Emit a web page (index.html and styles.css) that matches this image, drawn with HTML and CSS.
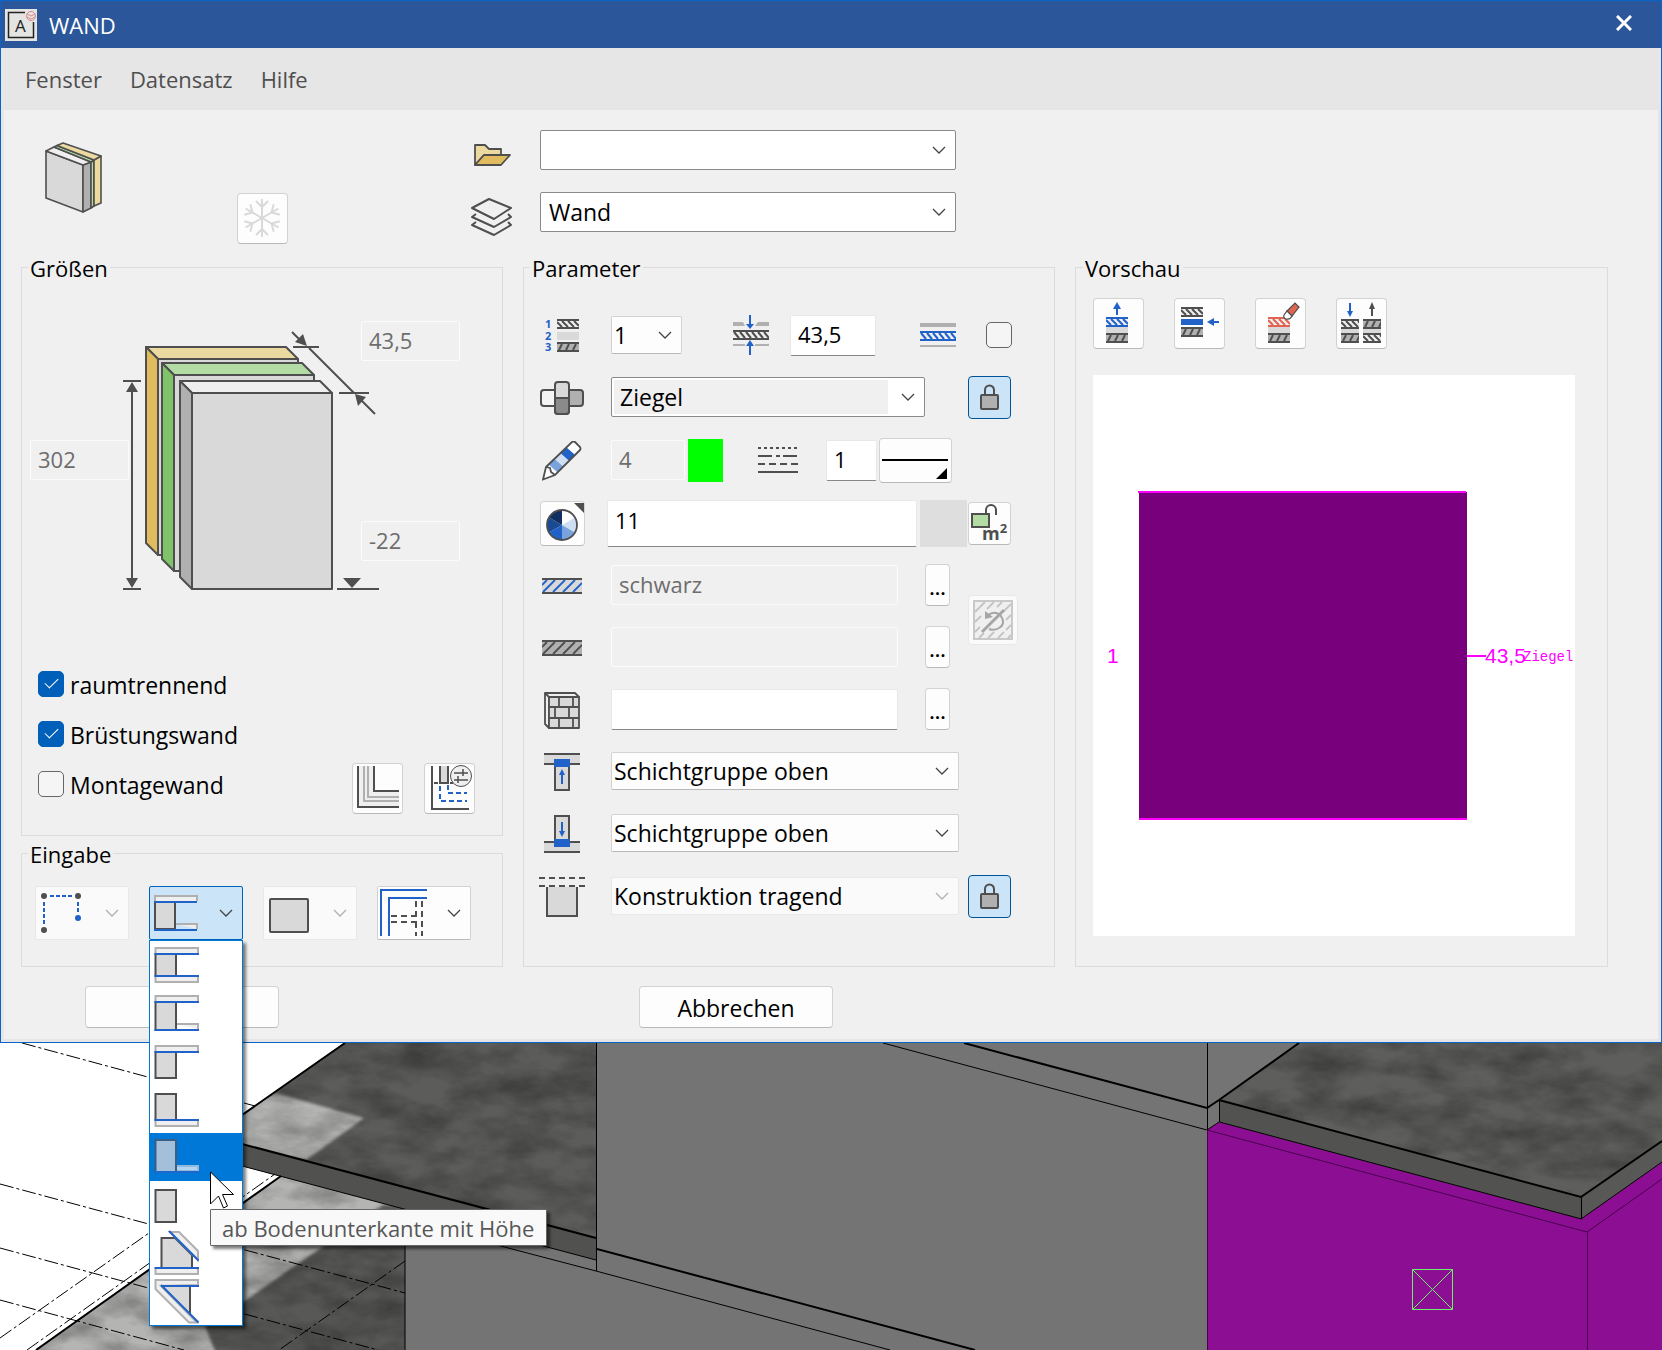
FILE: index.html
```html
<!DOCTYPE html>
<html lang="de">
<head>
    <meta charset="UTF-8">
    <meta name="viewport" content="width=device-width, initial-scale=1.0">
    <title>WAND</title>
    <link rel="stylesheet" href="styles.css">
</head>
<body>
    <!-- Shared icon parts -->
    <svg class="defs" width="0" height="0" aria-hidden="true">
        <defs>
            <symbol id="chevron" viewBox="0 0 14 8">
                <path d="M1 1l6 6 6-6" fill="none" stroke="currentColor" stroke-width="1.3"/>
            </symbol>
            <symbol id="hatch-a" viewBox="0 0 22 10" preserveAspectRatio="xMinYMin slice">
                <rect width="22" height="10" fill="#efefef"/>
                <path d="M0 3l5 5M5 2l6 6M11 2l6 6M17 2l5 5" stroke="currentColor" stroke-width="2"/>
                <path d="M0 1h22M0 9h22" stroke="currentColor" stroke-width="2"/>
            </symbol>
            <symbol id="hatch-b" viewBox="0 0 22 10" preserveAspectRatio="xMinYMin slice">
                <rect width="22" height="10" fill="#b0b0b0"/>
                <path d="M5 2l-3 6M12 2l-3 6M19 2l-3 6" stroke="currentColor" stroke-width="2"/>
                <path d="M0 1h22M0 9h22" stroke="currentColor" stroke-width="2"/>
            </symbol>
            <symbol id="lock" viewBox="0 0 43 43">
                <path d="M16 18v-5a4.500 4.500 0 0 1 9 0v5" fill="none" stroke="#4f4f4f" stroke-width="2"/>
                <rect x="12" y="18" width="17" height="14" rx="1" fill="#b0b0b0" stroke="#4f4f4f" stroke-width="2"/>
            </symbol>
        </defs>
    </svg>

    <div class="dialog">
        <header class="titlebar">
            <svg class="app-icon" width="32" height="32" viewBox="0 0 32 32">
                <rect width="32" height="32" fill="#e4e4e2"/>
                <path d="M20 3.500H3.500v25h25V13" fill="none" stroke="#222" stroke-width="1.5"/>
                <text x="10" y="23" class="app-letter">A</text>
                <circle cx="26" cy="7" r="4.500" fill="none" stroke="#d98a8a"/>
                <path d="M22 5l4 2 4-2M22 8l4 2 4-2" fill="none" stroke="#d98a8a"/>
            </svg>
            <h1>WAND</h1>
            <button class="close" aria-label="Schließen">
                <svg width="16" height="16" viewBox="0 0 16 16"><path d="M1 1l14 14M15 1L1 15" stroke="#fff" stroke-width="3"/></svg>
            </button>
        </header>

        <nav class="menubar">
            <a href="#">Fenster</a>
            <a href="#">Datensatz</a>
            <a href="#">Hilfe</a>
        </nav>

        <main class="content">
            <div class="head">
                <svg class="wall-icon" width="58" height="71" viewBox="45 142 58 71" stroke="#4f4f4f" stroke-width="1.6" stroke-linejoin="round">
                    <path d="M46 151l37 14v47l-37-14z" fill="#d9d9d9"/>
                    <path d="M83 165l8-3v46l-8 4z" fill="#b0b0b0"/>
                    <path d="M91 162l3-2v46l-3 2z" fill="#b2dca4"/>
                    <path d="M94 160l7-4v47l-7 3z" fill="#ecd9a0"/>
                    <path d="M46 151l8-4 37 15-8 3z" fill="#efefef"/>
                    <path d="M54 147l3-1.500 37 14.500-3 2z" fill="#b2dca4"/>
                    <path d="M57 145.500l6-2.500 38 13-7 4z" fill="#ecd9a0"/>
                </svg>
                <button class="tool snow" aria-label="Einfrieren">
                    <svg width="40" height="40" viewBox="-19 -19 40 40" fill="none" stroke="#d9d9d9" stroke-width="2">
                        <path d="M0 0v-19M0-11l-6-6M0-11l6-6"/>
                        <path d="M0 0v-19M0-11l-6-6M0-11l6-6" transform="rotate(60)"/>
                        <path d="M0 0v-19M0-11l-6-6M0-11l6-6" transform="rotate(120)"/>
                        <path d="M0 0v-19M0-11l-6-6M0-11l6-6" transform="rotate(180)"/>
                        <path d="M0 0v-19M0-11l-6-6M0-11l6-6" transform="rotate(240)"/>
                        <path d="M0 0v-19M0-11l-6-6M0-11l6-6" transform="rotate(300)"/>
                    </svg>
                </button>
                <div class="head-fields">
                    <label for="datei" aria-label="Datei">
                        <svg width="37" height="23" viewBox="0 0 37 23" stroke="#4f4f4f" stroke-width="1.8" stroke-linejoin="round">
                            <path d="M1 21V1h10l4 4h12v6H10z" fill="#ecd9a0"/>
                            <path d="M1 21l9-10h26l-9 10z" fill="#e0bc5e"/>
                        </svg>
                    </label>
                    <div class="select-box">
                        <select id="datei" class="combo"><option></option></select>
                        <svg class="chev"><use href="#chevron"/></svg>
                    </div>
                    <label for="layer" aria-label="Layer">
                        <svg width="42" height="39" viewBox="0 0 42 39" fill="none" stroke="#4f4f4f" stroke-width="2" stroke-linejoin="round">
                            <path d="M18 1l22 9-17 11L1 10z"/>
                            <path d="M5 16l-4 3 22 10 17-10-3-3"/>
                            <path d="M5 24l-4 3 22 10 17-10-3-3"/>
                        </svg>
                    </label>
                    <div class="select-box">
                        <select id="layer" class="combo"><option>Wand</option></select>
                        <svg class="chev"><use href="#chevron"/></svg>
                    </div>
                </div>
            </div>

            <div class="panels">
                <div class="left">
                    <fieldset class="sizes">
                        <legend>Größen</legend>
                        <div class="diagram">
                            <svg width="430" height="276" viewBox="30 31 430 276" stroke="#4f4f4f" stroke-width="2" stroke-linejoin="round">
                                <path d="M158 69h140v196H158z" fill="#d9d9d9"/>
                                <path d="M146 57h140l12 12H158z" fill="#ecd9a0"/>
                                <path d="M146 57l12 12v196l-12-12z" fill="#e0bc5e"/>
                                <path d="M174 85h140v196H174z" fill="#d9d9d9"/>
                                <path d="M162 73h140l12 12H174z" fill="#b2dca4"/>
                                <path d="M162 73l12 12v196l-12-12z" fill="#7fc468"/>
                                <path d="M192 103h140v196H192z" fill="#d9d9d9"/>
                                <path d="M180 91h140l12 12H192z" fill="#efefef"/>
                                <path d="M180 91l12 12v196l-12-12z" fill="#b0b0b0"/>
                                <!-- dimension lines -->
                                <path d="M123 91h18M123 299h18M132 96v198M292 42l12 12M293 57h26M309 58l45 45M339 103h30M358 107l17 17M337 299h42" fill="none"/>
                                <path d="M132 92l6 10h-12zM132 298l6-10h-12zM307 56l-4-12-8 8zM355 104l11 3-8 9zM343 288h18l-9 10z" fill="#4f4f4f" stroke="none"/>
                            </svg>
                            <input class="dim thick" type="text" value="43,5" aria-label="Dicke" disabled>
                            <input class="dim height" type="text" value="302" aria-label="Höhe" disabled>
                            <input class="dim base" type="text" value="-22" aria-label="Unterkante" disabled>
                        </div>
                        <div class="options">
                            <div class="checks">
                                <div class="check">
                                    <input id="raum" type="checkbox" checked>
                                    <label for="raum">raumtrennend</label>
                                </div>
                                <div class="check">
                                    <input id="bruestung" type="checkbox" checked>
                                    <label for="bruestung">Brüstungswand</label>
                                </div>
                                <div class="check">
                                    <input id="montage" type="checkbox">
                                    <label for="montage">Montagewand</label>
                                </div>
                            </div>
                            <div class="option-tools">
                                <button class="tool" aria-label="Schichten">
                                    <svg width="49" height="49" viewBox="1 1 49 49" fill="none" stroke-width="2">
                                        <path d="M6 3v41h41V28H22V3z" fill="#efefef"/>
                                        <path d="M12 3v35h35M16 3v31h31" stroke="#b0b0b0"/>
                                        <path d="M6 3v41h41M22 3v25h25" stroke="#4f4f4f"/>
                                    </svg>
                                </button>
                                <button class="tool" aria-label="Anschluss">
                                    <svg width="49" height="49" viewBox="1 1 49 49" fill="none" stroke-width="2">
                                        <path d="M16 3v17h8V3" fill="#d9d9d9" stroke="#4f4f4f"/>
                                        <path d="M8 3v43h37M10 20h4M26 20h3" stroke="#4f4f4f"/>
                                        <path d="M16 23v15h27M24 22v8h19" stroke="#2062c8" stroke-dasharray="5 3"/>
                                        <circle cx="37" cy="13" r="10.500" fill="#efefef" stroke="#4f4f4f" stroke-width="1"/>
                                        <path d="M30 10h14M30 17h14M39 6v7M34 13v7" stroke="#4f4f4f" stroke-width="1.5"/>
                                    </svg>
                                </button>
                            </div>
                        </div>
                    </fieldset>

                    <fieldset class="entry">
                        <legend>Eingabe</legend>
                        <div class="entry-tools">
                            <button class="split off" aria-label="Eingabeart" disabled>
                                <svg width="52" height="52" viewBox="1 1 52 52" fill="none" stroke-width="2">
                                    <path d="M15 10h22M9 16v22M43 16v12" stroke="#2062c8" stroke-dasharray="4 2"/>
                                    <circle cx="9" cy="10" r="3" fill="#4f4f4f"/><circle cx="43" cy="10" r="3" fill="#4f4f4f"/><circle cx="9" cy="44" r="3" fill="#4f4f4f"/>
                                    <circle cx="43" cy="32" r="3" fill="#2062c8"/>
                                </svg>
                                <svg class="chev"><use href="#chevron"/></svg>
                            </button>
                            <div class="drop">
                                <button class="split open" aria-label="Höhenbezug" aria-expanded="true">
                                    <svg width="52" height="52" viewBox="1 1 52 52" stroke-width="2">
                                        <path d="M6 15V10h42v5M27 38h21v5" fill="#efefef" stroke="#b0b0b0"/>
                                        <path d="M6 16h20v27H6z" fill="#d9d9d9" stroke="#4f4f4f"/>
                                        <path d="M5 16h43M5 44h43" stroke="#2062c8"/>
                                    </svg>
                                    <svg class="chev"><use href="#chevron"/></svg>
                                </button>
                                <div class="menu" role="menu">
                                    <button role="menuitem" aria-label="Decke unten bis Boden oben">
                                        <svg width="52" height="48" viewBox="1 0 52 48" stroke-width="2">
                                            <path d="M6.500 12V7H49v5M6.500 36v5H49v-5" fill="#efefef" stroke="#b0b0b0"/>
                                            <path d="M6.500 13H27v22H6.500z" fill="#d9d9d9" stroke="#4f4f4f"/>
                                            <path d="M5.500 13H50M5.500 35H50" stroke="#2062c8"/>
                                        </svg>
                                    </button>
                                    <button role="menuitem" aria-label="Decke unten bis Boden unten">
                                        <svg width="52" height="48" viewBox="1 0 52 48" stroke-width="2">
                                            <path d="M6.500 12V7H49v5M27 35h22v5" fill="#efefef" stroke="#b0b0b0"/>
                                            <path d="M6.500 13H27v28H6.500z" fill="#d9d9d9" stroke="#4f4f4f"/>
                                            <path d="M5.500 13H50M5.500 41H50" stroke="#2062c8"/>
                                        </svg>
                                    </button>
                                    <button role="menuitem" aria-label="ab Decke mit Höhe">
                                        <svg width="52" height="48" viewBox="1 0 52 48" stroke-width="2">
                                            <path d="M6.500 14V9H49v5" fill="#efefef" stroke="#b0b0b0"/>
                                            <path d="M6.500 15H27v26H6.500z" fill="#d9d9d9" stroke="#4f4f4f"/>
                                            <path d="M5.500 15H50" stroke="#2062c8"/>
                                        </svg>
                                    </button>
                                    <button role="menuitem" aria-label="ab Bodenoberkante mit Höhe">
                                        <svg width="52" height="48" viewBox="1 0 52 48" stroke-width="2">
                                            <path d="M6.500 36v5H49v-5" fill="#efefef" stroke="#b0b0b0"/>
                                            <path d="M6.500 9H27v26H6.500z" fill="#d9d9d9" stroke="#4f4f4f"/>
                                            <path d="M5.500 35H50" stroke="#2062c8"/>
                                        </svg>
                                    </button>
                                    <button class="active" role="menuitem" aria-describedby="tip" aria-label="ab Bodenunterkante mit Höhe">
                                        <svg width="52" height="48" viewBox="1 0 52 48" stroke-width="2">
                                            <path d="M27 33h22v5H27" fill="#b4d3ee" stroke="#8fb9dd"/>
                                            <path d="M6.500 7H27v32H6.500z" fill="#a3bfd9" stroke="#3a5f85"/>
                                            <path d="M5.500 39H50" stroke="#1a68cc"/>
                                        </svg>
                                    </button>
                                    <button role="menuitem" aria-label="freie Höhe">
                                        <svg width="52" height="48" viewBox="1 0 52 48" stroke-width="2">
                                            <path d="M6.500 9H27v32H6.500z" fill="#d9d9d9" stroke="#4f4f4f"/>
                                        </svg>
                                    </button>
                                    <button role="menuitem" aria-label="Dach bis Boden">
                                        <svg width="52" height="48" viewBox="1 0 52 48" stroke-width="2">
                                            <path d="M6.500 40v5H49v-5" fill="#efefef" stroke="#b0b0b0"/>
                                            <path d="M12.500 39V9H26l17 17v13z" fill="#d9d9d9" stroke="#4f4f4f"/>
                                            <path d="M21 3h9l19 19v9z" fill="#efefef" stroke="#b0b0b0"/>
                                            <path d="M20 2l29.500 29.500M5.500 39H50" stroke="#2062c8"/>
                                        </svg>
                                    </button>
                                    <button role="menuitem" aria-label="Decke bis Dach">
                                        <svg width="52" height="48" viewBox="1 0 52 48" stroke-width="2">
                                            <path d="M12 9h29v28z" fill="#d9d9d9"/>
                                            <path d="M41 9v28" stroke="#4f4f4f"/>
                                            <path d="M49 8V3H6.500v9L40 45.500h8L12 9z" fill="#efefef" stroke="#b0b0b0"/>
                                            <path d="M12 9h38M12 8l37.500 37.500" stroke="#2062c8"/>
                                        </svg>
                                    </button>
                                </div>
                                <svg class="cursor" width="26" height="38" viewBox="0 0 26 38">
                                    <path d="M.5 1v32l8-8 5 12 4-2-5-11.500h11z" fill="#fff" stroke="#000"/>
                                </svg>
                                <div class="tooltip" id="tip" role="tooltip">ab Bodenunterkante mit Höhe</div>
                            </div>
                            <button class="split off" aria-label="Wandform" disabled>
                                <svg width="52" height="52" viewBox="1 1 52 52"><rect x="7" y="13" width="38" height="33" rx="1" fill="#d9d9d9" stroke="#4f4f4f" stroke-width="2"/></svg>
                                <svg class="chev"><use href="#chevron"/></svg>
                            </button>
                            <button class="split" aria-label="Wandanschluss">
                                <svg width="52" height="52" viewBox="1 1 52 52" fill="none" stroke-width="2">
                                    <path d="M4 50V4h46M12 50V12h38" stroke="#2062c8"/>
                                    <path d="M14 30h26M14 36h26M39 15v15M39 36v14M45 15v35" stroke="#4f4f4f" stroke-dasharray="6 4"/>
                                </svg>
                                <svg class="chev"><use href="#chevron"/></svg>
                            </button>
                        </div>
                    </fieldset>
                </div>

                <fieldset class="params">
                    <legend>Parameter</legend>
                    <div class="param-grid">
                        <label for="schicht" aria-label="Schicht">
                            <svg width="36" height="38" viewBox="0 -2 36 38" color="#4f4f4f">
                                <text class="num" x="1" y="9">1</text><text class="num" x="1" y="21">2</text><text class="num" x="1" y="32">3</text>
                                <use href="#hatch-a" x="13" y="0" width="22" height="10"/>
                                <rect x="13" y="13" width="22" height="8" fill="#d9d9d9"/>
                                <use href="#hatch-b" x="13" y="23" width="22" height="10"/>
                            </svg>
                        </label>
                        <div class="field row-layer">
                            <div class="select-box">
                                <select id="schicht" class="flat"><option>1</option></select>
                                <svg class="chev"><use href="#chevron"/></svg>
                            </div>
                            <label for="dicke" aria-label="Dicke">
                                <svg width="36" height="40" viewBox="0 0 36 40" color="#4f4f4f">
                                    <path d="M0 7h10l2 4H0zM36 7H25l-3 4h14zM0 29h12v2H0zM22 29h14v2H22z" fill="#b0b0b0"/>
                                    <rect y="15" width="36" height="10" fill="#efefef"/>
                                    <path d="M1 17l5 6M7 17l5 6M13 17l5 6M19 17l5 6M25 17l5 6M31 17l5 6M0 16h36M0 24h36" stroke="#4f4f4f" stroke-width="2"/>
                                    <path d="M17 0v10M17 30v10" stroke="#2062c8" stroke-width="2"/>
                                    <path d="M17 14l-4-5h8zM17 25l-4 6h8z" fill="#2062c8"/>
                                </svg>
                            </label>
                            <input id="dicke" class="thickness" type="text" value="43,5">
                            <label for="aktiv" aria-label="Schicht aktiv">
                                <svg width="36" height="24" viewBox="0 0 36 24">
                                    <path d="M0 0h36v4H0zM0 22h36v2H0z" fill="#b0b0b0"/>
                                    <rect y="8" width="36" height="10" fill="#efefef"/>
                                    <path d="M1 10l5 6M7 10l5 6M13 10l5 6M19 10l5 6M25 10l5 6M31 10l5 6M0 9h36M0 17h36" stroke="#2062c8" stroke-width="2"/>
                                </svg>
                            </label>
                        </div>
                        <input id="aktiv" type="checkbox" class="side-check">

                        <label for="material" aria-label="Material">
                            <svg width="44" height="34" viewBox="0 0 44 34" stroke="#4f4f4f" stroke-width="2">
                                <rect x="1" y="9" width="18" height="16" rx="3" fill="#f4f4f4"/>
                                <rect x="25" y="9" width="18" height="16" rx="3" fill="#b0b0b0"/>
                                <rect x="15" y="1" width="14" height="32" rx="3" fill="#d9d9d9"/>
                                <path d="M15 17h14v13q0 3-3 3h-8q-3 0-3-3z" fill="#8a8a8a"/>
                            </svg>
                        </label>
                        <div class="field">
                            <div class="select-box material">
                                <select id="material" class="combo"><option>Ziegel</option></select>
                                <svg class="chev"><use href="#chevron"/></svg>
                            </div>
                        </div>
                        <button class="lock" aria-label="Material gesperrt"><svg width="43" height="43"><use href="#lock"/></svg></button>

                        <label for="stift" aria-label="Stift">
                            <svg width="40" height="40" viewBox="0 0 40 40">
                                <path d="M4 26L30 1q2-1 3 0l5 5q1 2 0 3L13 34 1 38.500z" fill="#fff"/>
                                <path d="M6.600 23.500l6-5.800 8.800 7.700-5.800 6z" fill="#7aa2dd"/>
                                <path d="M12.600 17.700l5.700-5.700 8.700 7.700-5.600 5.700z" fill="#cfdff3"/>
                                <path d="M18.300 12l6-5.700 8.600 7.400-5.900 6z" fill="#2062c8"/>
                                <path d="M4 26L30 1q2-1 3 0l5 5q1 2 0 3L13 34 1 38.500zM4 26l4 1 1 4 4 3" fill="none" stroke="#4f4f4f" stroke-width="1.8"/>
                            </svg>
                        </label>
                        <div class="field row-pen">
                            <input id="stift" class="pen" type="text" value="4" disabled>
                            <span class="swatch"></span>
                            <label for="linie" aria-label="Linienart">
                                <svg width="40" height="28" viewBox="0 0 40 28" stroke="#4f4f4f" stroke-width="2">
                                    <path d="M0 2h40" stroke-dasharray="3 3"/>
                                    <path d="M0 10h14M18 10h4M25 10h14"/>
                                    <path d="M0 18h40" stroke-dasharray="7 4"/>
                                    <path d="M0 26h40"/>
                                </svg>
                            </label>
                            <input id="linie" class="line" type="text" value="1">
                            <button class="line-btn" aria-label="Linienart wählen">
                                <svg width="71" height="43" viewBox="0 0 71 43"><path d="M2 21h66" stroke="#000" stroke-width="2"/><path d="M67 29v11H56z"/></svg>
                            </button>
                        </div>
                        <span></span>

                        <button class="wheel" aria-label="Farbe">
                            <svg width="43" height="43" viewBox="-21 -23 43 43">
                                <path d="M0 0V-15A15 15 0 0 1 13-7.500z" fill="#fff"/>
                                <path d="M0 0L13-7.500A15 15 0 0 1 13 7.500z" fill="#cfdff3"/>
                                <path d="M0 0L13 7.500A15 15 0 0 1 0 15z" fill="#7aa2dd"/>
                                <path d="M0 0V15A15 15 0 0 1-13 7.500z" fill="#2062c8"/>
                                <path d="M0 0L-13 7.500A15 15 0 0 1-13-7.500z" fill="#1a4a94"/>
                                <path d="M0 0L-13-7.500A15 15 0 0 1 0-15z" fill="#12305f"/>
                                <circle r="15" fill="none" stroke="#4f4f4f" stroke-width="1.8"/>
                                <path d="M12-22h10v10z" fill="#4f4f4f"/>
                            </svg>
                        </button>
                        <div class="field row-color">
                            <input class="color-no" type="text" value="11" aria-label="Farbnummer">
                            <span class="color-box"></span>
                        </div>
                        <button class="unlock" aria-label="Fläche">
                            <svg width="41" height="41" viewBox="1 1 41 41">
                                <path d="M18 12V8a5 5 0 0 1 10 0v5" fill="none" stroke="#4f4f4f" stroke-width="2"/>
                                <rect x="4" y="12" width="17" height="13" fill="#b2dca4" stroke="#4f4f4f" stroke-width="2"/>
                                <text class="unit" x="14" y="38">m<tspan class="sup" dy="-7">2</tspan></text>
                            </svg>
                        </button>

                        <label for="schraffur" aria-label="Schraffur">
                            <svg width="40" height="16" viewBox="0 0 40 16" stroke-width="1.8">
                                <rect width="40" height="16" fill="#d9d9d9"/>
                                <path d="M0 7l5-5M1 14L13 2M11 14L23 2M21 14L33 2M31 14l9-9" stroke="#2062c8"/>
                                <path d="M0 1h40M0 15h40" stroke="#4f4f4f"/>
                            </svg>
                        </label>
                        <div class="field row-pick">
                            <input id="schraffur" type="text" value="schwarz" disabled>
                            <button class="more" aria-label="Schraffur wählen">...</button>
                        </div>
                        <button class="rotate" aria-label="Ausrichtung" disabled>
                            <svg width="40" height="40" viewBox="0 0 40 40" fill="none" stroke="#c4c4c4" stroke-width="1.8">
                                <rect x="1" y="1" width="38" height="38" fill="#f0f0f0"/>
                                <path d="M2 12L12 2M14 9l7-7M24 7l5-5M2 22l6-6M30 12l8-8M2 32l5-5M33 20l5-5M6 38l5-5M15 38l6-6M25 38l6-6M33 30l5-5M35 38l3-3"/>
                                <path d="M9 32l22-22" stroke="#a6a6a6" stroke-width="3"/>
                                <path d="M15 15q8-5 13 1 5 8-2 12-5 3-10 1" stroke="#a6a6a6" stroke-width="2"/>
                                <path d="M12 11v8l8-2z" fill="#a6a6a6" stroke="none"/>
                            </svg>
                        </button>

                        <label for="fuellung" aria-label="Füllung">
                            <svg width="40" height="16" viewBox="0 0 40 16" stroke="#4f4f4f" stroke-width="1.8">
                                <rect width="40" height="16" fill="#b0b0b0" stroke="none"/>
                                <path d="M0 7l5-5M1 14L13 2M11 14L23 2M21 14L33 2M31 14l9-9M0 1h40M0 15h40"/>
                            </svg>
                        </label>
                        <div class="field row-pick">
                            <input id="fuellung" type="text" disabled>
                            <button class="more" aria-label="Füllung wählen">...</button>
                        </div>

                        <label for="textur" aria-label="Textur">
                            <svg width="36" height="37" viewBox="0 0 36 37" stroke="#4f4f4f" stroke-width="1.8" stroke-linejoin="round">
                                <path d="M1 1h30l4 4H5v31l-4-4z" fill="#efefef"/>
                                <path d="M5 5h30v31H5z" fill="#d9d9d9"/>
                                <path d="M1 1l4 4M5 15h30M5 26h30M15 5v10M29 5v10M11 15v11M25 15v11M15 26v10M29 26v10" fill="none"/>
                            </svg>
                        </label>
                        <div class="field row-pick">
                            <input id="textur" type="text">
                            <button class="more" aria-label="Textur wählen">...</button>
                        </div>
                        <span></span>

                        <label for="oben" aria-label="Anschluss oben">
                            <svg width="36" height="38" viewBox="0 0 36 38">
                                <rect y="1" width="36" height="11" fill="#d9d9d9"/>
                                <path d="M0 1h36M0 11h36" stroke="#4f4f4f" stroke-width="2"/>
                                <rect x="11" y="8" width="14" height="29" fill="#d9d9d9" stroke="#4f4f4f" stroke-width="2"/>
                                <rect x="10" y="6" width="16" height="8" fill="#2062c8"/>
                                <path d="M18 20v11" stroke="#2062c8" stroke-width="2"/><path d="M18 16l3 6h-6z" fill="#2062c8"/>
                            </svg>
                        </label>
                        <div class="field">
                            <div class="select-box group">
                                <select id="oben" class="flat"><option>Schichtgruppe oben</option></select>
                                <svg class="chev"><use href="#chevron"/></svg>
                            </div>
                        </div>
                        <span></span>

                        <label for="unten" aria-label="Anschluss unten">
                            <svg width="36" height="38" viewBox="0 0 36 38">
                                <rect y="26" width="36" height="11" fill="#d9d9d9"/>
                                <path d="M0 27h36M0 37h36" stroke="#4f4f4f" stroke-width="2"/>
                                <rect x="11" y="1" width="14" height="29" fill="#d9d9d9" stroke="#4f4f4f" stroke-width="2"/>
                                <rect x="10" y="24" width="16" height="8" fill="#2062c8"/>
                                <path d="M18 7v11" stroke="#2062c8" stroke-width="2"/><path d="M18 22l3-6h-6z" fill="#2062c8"/>
                            </svg>
                        </label>
                        <div class="field">
                            <div class="select-box group">
                                <select id="unten" class="flat"><option>Schichtgruppe oben</option></select>
                                <svg class="chev"><use href="#chevron"/></svg>
                            </div>
                        </div>
                        <span></span>

                        <label for="tragend" aria-label="Konstruktion">
                            <svg class="load" width="46" height="41" viewBox="0 0 46 41">
                                <path d="M8 10v29h30V10" fill="#d9d9d9" stroke="#4f4f4f" stroke-width="2"/>
                                <path d="M0 1h46M0 9h46" stroke="#4f4f4f" stroke-width="2" stroke-dasharray="6 4"/>
                            </svg>
                        </label>
                        <div class="field">
                            <div class="select-box group off">
                                <select id="tragend" class="flat" disabled><option>Konstruktion tragend</option></select>
                                <svg class="chev"><use href="#chevron"/></svg>
                            </div>
                        </div>
                        <button class="lock" aria-label="Konstruktion gesperrt"><svg width="43" height="43"><use href="#lock"/></svg></button>
                    </div>
                </fieldset>

                <fieldset class="preview">
                    <legend>Vorschau</legend>
                    <div class="preview-tools">
                        <button class="tool" aria-label="Schicht einfügen">
                            <svg width="49" height="49" viewBox="1 1 49 49" color="#4f4f4f">
                                <path d="M24 9v8" stroke="#2062c8" stroke-width="2"/><path d="M24 4l4 7h-8z" fill="#2062c8"/>
                                <rect x="13" y="29" width="22" height="6" fill="#d9d9d9"/>
                                <use href="#hatch-a" x="13" y="19" width="22" height="10" color="#2062c8"/>
                                <use href="#hatch-b" x="13" y="35" width="22" height="10"/>
                            </svg>
                        </button>
                        <button class="tool" aria-label="Schicht dazwischen">
                            <svg width="49" height="49" viewBox="1 1 49 49" color="#4f4f4f">
                                <use href="#hatch-a" x="7" y="9" width="22" height="10"/>
                                <rect x="7" y="21" width="22" height="6" fill="#2062c8"/>
                                <use href="#hatch-b" x="7" y="29" width="22" height="10"/>
                                <path d="M38 24h7" stroke="#2062c8" stroke-width="2"/><path d="M33 24l7-4v8z" fill="#2062c8"/>
                            </svg>
                        </button>
                        <button class="tool" aria-label="Schicht löschen">
                            <svg width="49" height="49" viewBox="1 1 49 49" color="#4f4f4f">
                                <rect x="13" y="29" width="22" height="6" fill="#d9d9d9"/>
                                <use href="#hatch-a" x="13" y="19" width="22" height="10" color="#e06450"/>
                                <use href="#hatch-b" x="13" y="35" width="22" height="10"/>
                                <path d="M32 13l8-8 4 4-7 9z" fill="#e06450" stroke="#4f4f4f" stroke-width="1.2"/>
                                <path d="M32 13l5 5q-2 4-6 3-3-1-2-4z" fill="#fff" stroke="#4f4f4f" stroke-width="1.2"/>
                            </svg>
                        </button>
                        <button class="tool" aria-label="Schichten umkehren">
                            <svg width="49" height="49" viewBox="1 1 49 49" color="#4f4f4f">
                                <path d="M5 31h18v4H5zM27 31h18v4H27z" fill="#d9d9d9"/>
                                <svg x="5" y="21" width="18" height="24"><use href="#hatch-a" width="22" height="10"/><use href="#hatch-b" y="14" width="22" height="10"/></svg>
                                <svg x="27" y="21" width="18" height="24"><use href="#hatch-b" width="22" height="10"/><use href="#hatch-a" y="14" width="22" height="10"/></svg>
                                <path d="M14 5v8" stroke="#2062c8" stroke-width="2"/><path d="M14 19l-3-6h6z" fill="#2062c8"/>
                                <path d="M36 10v8" stroke="#4f4f4f" stroke-width="2"/><path d="M36 4l3 7h-6z" fill="#4f4f4f"/>
                            </svg>
                        </button>
                    </div>
                    <svg class="preview-view" viewBox="0 0 482 561">
                        <rect x="46" y="117" width="328" height="327" fill="#78007c"/>
                        <path d="M45 117h328M46 444h328M374 281h19" stroke="#f0f" stroke-width="2"/>
                        <text class="cad" x="14" y="288">1</text>
                        <text class="cad" x="392" y="288">43,5</text>
                        <text class="cad-small" x="430" y="286">Ziegel</text>
                    </svg>
                </fieldset>
            </div>

            <footer class="actions">
                <button class="push" aria-label="OK"></button>
                <button class="push">Abbrechen</button>
            </footer>
        </main>
    </div>

    <!-- 3D view behind the dialog -->
    <svg class="scene" viewBox="0 1043 1662 307" preserveAspectRatio="xMidYMin slice" aria-hidden="true">
        <defs>
            <filter id="concrete" x="0" y="0" width="100%" height="100%" color-interpolation-filters="sRGB">
                <feTurbulence type="fractalNoise" baseFrequency="0.02 0.04" numOctaves="5" seed="7" result="n"/>
                <feColorMatrix in="n" type="matrix" values="0 0 0 0 0  0 0 0 0 0  0 0 0 0 0  0.6 0 0 0 -0.2" result="d"/>
                <feComposite in="d" in2="SourceGraphic" operator="in" result="t"/>
                <feMerge><feMergeNode in="SourceGraphic"/><feMergeNode in="t"/></feMerge>
            </filter>
            <filter id="soft"><feGaussianBlur stdDeviation="1.5"/></filter>
            <clipPath id="floor"><path d="M212 1158l193 51v141H36L281 1176z"/></clipPath>
            <clipPath id="slab"><path d="M345 1043h251v195L212 1136z"/></clipPath>
        </defs>
        <rect y="1043" width="1662" height="307" fill="#fff"/>

        <!-- lower floor -->
        <g clip-path="url(#floor)" filter="url(#concrete)">
            <path d="M0 1043h405v307H0z" fill="#b4b4b3"/>
            <path d="M383 1205l-61 42-79 55-38 24 12 30h200v-151z" fill="#585857" filter="url(#soft)"/>
        </g>
        <path d="M405 1209l191 50V1043h1066v307H405z" fill="#747474"/>

        <!-- upper slab -->
        <g clip-path="url(#slab)" filter="url(#concrete)">
            <path d="M200 1043h400v200H200z" fill="#5c5c5b"/>
            <path d="M275 1093l89 25-58 42-100-20-20-5z" fill="#b4b4b3" filter="url(#soft)"/>
        </g>
        <path d="M212 1136l384 102v22l-384-102z" fill="#515150"/>

        <!-- right slab and selected wall -->
        <path d="M1207 1130l12-8 362 97 81-57v188h-455z" fill="#8c0f93"/>
        <path d="M1219 1100l80-57h363v98l-81 56z" fill="#5e5e5d" filter="url(#concrete)"/>
        <path d="M1219 1100l362 97v22l-362-97z" fill="#525251"/>
        <path d="M1581 1197l81-56v21l-81 57z" fill="#585857"/>

        <g fill="none" stroke="#000">
            <path stroke-width="2" d="M345 1043l-133 93 384 102M281 1176L36 1350M597 1249l378 101M964 1043l243 65 12-8 80-57M1219 1100l362 97 81-56"/>
            <path d="M212 1158l384 102M405 1221l191 50 294 79M405 1221v129M596.500 1043v228M883 1043l324 87M1207.500 1043v87M1219.500 1100v22l362 97v-22M1581 1219l81-57M1207 1130l12-8"/>
            <path stroke-dasharray="14 3 3 3" d="M22 1043l233 63M0 1184l405 109M0 1248l378 102M0 1300l184 50M0 1338l149-105M27 1350l248-176M405 1261l-126 89"/>
        </g>
        <path d="M1207 1130l380 102 75-53M1587.500 1232v118M1207.500 1130v220" fill="none" stroke="#4a0050"/>
        <path d="M1412.500 1269.500h40v40h-40zl40 40M1452.500 1269.500l-40 40" fill="none" stroke="#6cf06c"/>
    </svg>
</body>
</html>
```

FILE: styles.css
```css
* {
    box-sizing: border-box;
}
body {
    margin: 0;
    min-height: 100vh;
    display: flex;
    flex-direction: column;
    background-color: #fff;
    font-family: 'Open Sans', 'Noto Sans', sans-serif;
    font-size: 23px;
    line-height: 24px;
    color: #000;
}
.defs {
    position: absolute;
}
svg {
    display: block;
    flex: none;
}
button, input, select {
    font: inherit;
    color: inherit;
    margin: 0;
    padding: 0;
}
button {
    background-color: #fdfdfd;
    border: 1px solid #d2d2d2;
    border-bottom-color: #b9b9b9;
    border-radius: 4px;
    cursor: pointer;
}

/* dialog frame */
.dialog {
    position: relative;
    z-index: 1;
    border: 1px solid #0a63c9;
    background-color: #e6e6e6;
}
.titlebar {
    display: flex;
    align-items: center;
    height: 47px;
    padding: 0 28px 0 4px;
    background-color: #2b579a;
    color: #fff;
}
.titlebar h1 {
    margin: 0 auto 0 12px;
    font-size: 22px;
    font-weight: normal;
}
.app-letter {
    font-size: 17px;
    fill: #222;
}
.close {
    width: 18px;
    height: 24px;
    margin-bottom: 4px;
    display: grid;
    place-items: center;
    background: none;
    border: none;
}
.menubar {
    display: flex;
    align-items: center;
    gap: 28px;
    height: 62px;
    padding-left: 24px;
}
.menubar a {
    color: #4f4f4f;
    font-size: 22px;
    text-decoration: none;
}
.content {
    margin: 0 3px 3px;
    padding: 20px 50px 11px 17px;
    background-color: #f0f0f0;
}

/* top row */
.head {
    display: flex;
    margin-bottom: 10px;
    padding-left: 24px;
}
.wall-icon {
    margin: 12px 134px 0 0;
}
.tool {
    width: 51px;
    height: 51px;
    display: grid;
    place-items: center;
}
.snow {
    align-self: flex-end;
    margin-right: 183px;
}
.head-fields {
    display: grid;
    grid-template-columns: 42px 416px;
    grid-template-rows: 40px 40px;
    gap: 22px 27px;
    height: 114px;
    align-items: center;
    justify-items: center;
}
.head-fields label {
    margin-top: 10px;
}

/* controls */
.select-box {
    display: grid;
    width: 100%;
    height: 40px;
    align-items: center;
}
.select-box select, .select-box .chev {
    grid-area: 1 / 1;
}
.select-box .chev {
    justify-self: end;
    margin-right: 10px;
    pointer-events: none;
}
.chev {
    width: 14px;
    height: 8px;
    color: #444;
}
select {
    width: 100%;
    height: 100%;
    appearance: none;
    border-radius: 2px;
    line-height: 32px;
}
.combo {
    padding-left: 8px;
    background-color: #fff;
    border: 1px solid #8a8a8a;
}
.flat {
    padding-left: 2px;
    background-color: #fdfdfd;
    border: 1px solid #d2d2d2;
    border-bottom-color: #b9b9b9;
}
.flat:disabled {
    color: #000;
    opacity: 1;
    background-color: #fafafa;
    border-color: #e8e8e8;
}
.off .chev {
    color: #b0b0b0;
}
input[type="text"] {
    height: 41px;
    min-width: 0;
    padding: 0 7px 2px;
    background-color: #fff;
    border: 1px solid #e8e8e8;
    border-bottom-color: #868686;
    border-radius: 2px;
    font-size: 22px;
}
input[type="text"]:disabled {
    height: 40px;
    background-color: #f0f0f0;
    border-color: #fbfbfb;
    color: #6d6d6d;
}
input[type="checkbox"] {
    appearance: none;
    width: 26px;
    height: 26px;
    display: grid;
    place-content: center;
    background-color: #f5f5f5;
    border: 1px solid #666;
    border-radius: 5px;
}
input[type="checkbox"]:checked {
    background-color: #005fb8;
    border-color: #005fb8;
}
input[type="checkbox"]:checked::before {
    content: "";
    width: 12px;
    height: 6px;
    margin-bottom: 5px;
    border: solid #fff;
    border-width: 0 0 1px 1px;
    transform: rotate(-45deg);
}

/* group boxes */
.panels {
    display: grid;
    grid-template-columns: 482fr 532fr 533fr;
    gap: 20px;
}
fieldset {
    min-width: 0;
    margin: 0;
    padding: 0 17px;
    border: 1px solid #dcdcdc;
}
legend {
    margin-left: -10px;
    padding: 2px 2px 0;
    font-size: 22px;
}
.sizes {
    padding: 41px 27px 21px 8px;
}
.sizes legend {
    margin-left: -2px;
}
.diagram {
    display: grid;
    grid-template-columns: 99px 1fr 99px;
    grid-template-rows: 40px 79px 40px 41px 40px 36px;
    width: 430px;
    margin-bottom: 62px;
}
.diagram svg {
    grid-area: 1 / 1 / -1 / -1;
}
.dim.thick {
    grid-area: 1 / 3;
}
.dim.height {
    grid-area: 3 / 1;
}
.dim.base {
    grid-area: 5 / 3;
}
.options {
    display: flex;
    justify-content: space-between;
    align-items: flex-end;
    padding-left: 8px;
}
.checks {
    padding-bottom: 5px;
}
.check {
    display: flex;
    align-items: center;
    gap: 6px;
    height: 50px;
}
.check label {
    padding-top: 2px;
}
.option-tools {
    display: flex;
    gap: 21px;
}
.entry {
    margin-top: 4px;
    padding: 20px 13px 26px;
}
.entry legend {
    margin-left: -7px;
}
.entry-tools {
    display: flex;
    gap: 20px;
}
.split {
    width: 94px;
    height: 54px;
    padding-right: 9px;
    display: flex;
    align-items: center;
    justify-content: space-between;
    border-radius: 2px;
}
.split.off {
    background-color: #fafafa;
    border-color: #e8e8e8;
}
.split.open {
    background-color: #cce4f7;
    border-color: #0062b8;
}

/* open drop-down */
.drop {
    position: relative;
}
.menu {
    position: absolute;
    top: 54px;
    left: 0;
    z-index: 2;
    width: 94px;
    background-color: #fff;
    border: 1px solid #0078d7;
    box-shadow: 3px 3px 3px rgba(0,0,0,0.5);
}
.menu button {
    display: block;
    width: 100%;
    height: 48px;
    border: none;
    border-radius: 0;
    background-color: #fff;
}
.menu .active {
    background-color: #0078d7;
}
.cursor {
    position: absolute;
    top: 285px;
    left: 61px;
    z-index: 4;
}
.tooltip {
    position: absolute;
    top: 323px;
    left: 61px;
    z-index: 3;
    padding: 6px 12px 5px 11px;
    background-color: #f9f9f9;
    border: 1px solid #666;
    border-radius: 1px;
    box-shadow: 3px 3px 3px rgba(0,0,0,0.5);
    color: #575757;
    font-size: 22px;
    white-space: nowrap;
}

/* parameter rows */
.params {
    padding: 24px 16px 0;
}
.params legend {
    margin-left: -10px;
}
.param-grid {
    display: grid;
    grid-template-columns: 44px 384px 51px;
    grid-template-rows: 62px 62px 64px repeat(6, 62px) 64px;
    align-items: center;
}
.param-grid > label {
    justify-self: center;
    margin-top: 2px;
}
.field {
    display: flex;
    align-items: center;
    padding-left: 27px;
}
.load {
    margin: 0 -1px;
}
.row-layer .select-box {
    width: 71px;
    height: 38px;
    margin-right: 51px;
}
.thickness {
    width: 86px;
    margin: 0 44px 0 21px;
}
.side-check {
    margin-left: 18px;
}
.material {
    width: 314px;
}
.material .combo {
    background: linear-gradient(#f0f0f0, #f0f0f0) 2px 2px / 274px 34px no-repeat #fff;
}
.lock {
    width: 43px;
    height: 43px;
    display: grid;
    place-items: center;
    background-color: #cce4f7;
    border-color: #005499;
}
.pen {
    width: 74px;
}
.swatch {
    width: 35px;
    height: 43px;
    margin: 0 35px 0 3px;
    background-color: #0f0;
}
.line {
    width: 51px;
    margin: 0 2px 0 28px;
}
.line-btn {
    width: 73px;
    height: 45px;
}
.wheel {
    width: 45px;
    height: 45px;
}
.row-color {
    gap: 3px;
    padding-left: 23px;
}
.row-color .color-no {
    width: 310px;
    height: 47px;
    padding-bottom: 6px;
}
.color-box {
    width: 47px;
    height: 47px;
    background-color: #dedede;
}
.unlock {
    width: 43px;
    height: 43px;
}
.unit {
    font-size: 18px;
    font-weight: bold;
    fill: #4f4f4f;
}
.sup {
    font-size: 13px;
}
.num {
    font-size: 11px;
    font-weight: bold;
    fill: #2062c8;
}
.row-pick {
    gap: 27px;
}
.row-pick input {
    width: 287px;
}
.more {
    width: 25px;
    height: 42px;
    padding-top: 6px;
    font-size: 20px;
    font-weight: 600;
}
.rotate {
    grid-row: 5 / span 2;
    grid-column: 3;
    width: 50px;
    height: 50px;
    margin-top: 8px;
    display: grid;
    place-items: center;
    background-color: #fafafa;
    border-color: #e8e8e8;
}
.group {
    width: 348px;
    height: 38px;
}

/* preview */
.preview {
    padding: 18px 32px 30px 17px;
}
.preview-tools {
    display: flex;
    gap: 30px;
    margin-bottom: 26px;
}
.preview-view {
    width: 100%;
    background-color: #fff;
}
.cad {
    font-family: 'Liberation Sans', sans-serif;
    font-size: 21px;
    fill: #f0f;
}
.cad-small {
    font-family: 'Liberation Mono', monospace;
    font-size: 14px;
    fill: #f0f;
}

.actions {
    display: flex;
    gap: 360px;
    padding: 19px 0 0 64px;
}
.push {
    width: 194px;
    height: 42px;
    padding-top: 2px;
}

.scene {
    width: 100%;
    flex: 1 0 307px;
    height: 307px;
}
```
